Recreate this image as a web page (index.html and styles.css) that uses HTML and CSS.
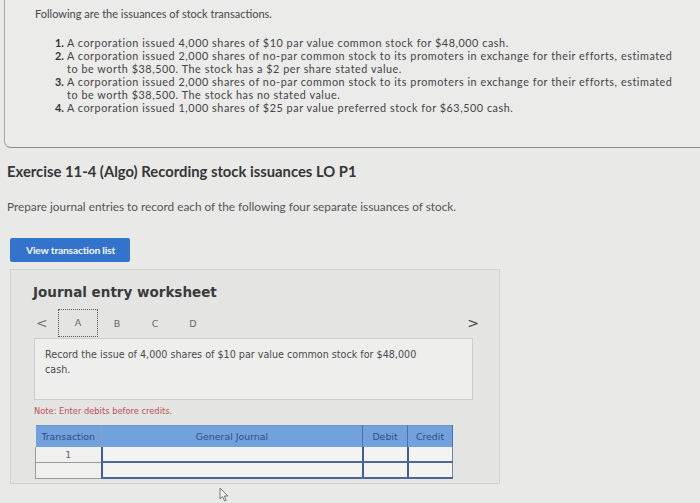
FILE: index.html
```html
<!DOCTYPE html>
<html>
<head>
<meta charset="utf-8">
<link rel="stylesheet" href="styles.css">
</head>
<body>
<div class="page">
  <section class="top-box">
    <p class="intro">Following are the issuances of stock transactions.</p>
    <ol class="list">
      <li><span class="num">1.</span><span>A corporation issued 4,000 shares of $10 par value common stock for $48,000 cash.</span></li>
      <li><span class="num">2.</span><span>A corporation issued 2,000 shares of no-par common stock to its promoters in exchange for their efforts, estimated<br>to be worth $38,500. The stock has a $2 per share stated value.</span></li>
      <li><span class="num">3.</span><span>A corporation issued 2,000 shares of no-par common stock to its promoters in exchange for their efforts, estimated<br>to be worth $38,500. The stock has no stated value.</span></li>
      <li><span class="num">4.</span><span>A corporation issued 1,000 shares of $25 par value preferred stock for $63,500 cash.</span></li>
    </ol>
  </section>

  <h2 class="exercise">Exercise 11-4 (Algo) Recording stock issuances LO P1</h2>
  <p class="prepare">Prepare journal entries to record each of the following four separate issuances of stock.</p>
  <div class="btn">View transaction list</div>

  <section class="panel">
    <h3 class="ws-title">Journal entry worksheet</h3>
    <div class="tabs">
      <span class="arrow left">&lt;</span>
      <span class="tab active">A</span>
      <span class="tab">B</span>
      <span class="tab">C</span>
      <span class="tab">D</span>
      <span class="arrow right">&gt;</span>
    </div>
    <div class="record">Record the issue of 4,000 shares of $10 par value common stock for $48,000<br>cash.</div>
    <p class="note">Note: Enter debits before credits.</p>
    <table class="journal">
      <colgroup><col class="w-tr"><col class="w-gj"><col class="w-d"><col class="w-c"></colgroup>
      <thead>
        <tr><th class="c-tr">Transaction</th><th class="c-gj">General Journal</th><th class="c-d">Debit</th><th class="c-c">Credit</th></tr>
      </thead>
      <tbody>
        <tr><td class="c-tr">1</td><td class="in"></td><td class="in"></td><td class="in"></td></tr>
        <tr><td class="c-tr"></td><td class="in"></td><td class="in"></td><td class="in"></td></tr>
      </tbody>
    </table>
  </section>

  <svg class="cursor" width="10" height="15" viewBox="0 0 10 15"><path d="M1 1 L1 12 L3.6 9.6 L5.6 14 L7.2 13.2 L5.3 9 L8.8 9 Z" fill="#f4f4f4" stroke="#6a6a6a" stroke-width="0.9" stroke-linejoin="round"/></svg>
</div>
</body>
</html>
```

FILE: styles.css
```css
html, body {
  margin: 0;
  padding: 0;
}
body {
  background: #e9e9e8;
  font-family: Lato, "Open Sans", sans-serif;
  color: #4a4a4a;
}
.page {
  position: relative;
  width: 700px;
  height: 503px;
  overflow: hidden;
}
.top-box {
  margin-left: 4px;
  height: 148px;
  box-sizing: border-box;
  border-left: 1px solid #a4a4a4;
  border-bottom: 1px solid #8c8c8c;
  border-bottom-left-radius: 7px;
  padding: 6px 0 0 30px;
  background: #ebebea;
}
.intro {
  margin: 0;
  font-size: 11px;
  line-height: 16px;
  color: #474747;
}
.list {
  list-style: none;
  margin: 14px 0 0 20px;
  padding: 0;
  font-size: 10.8px;
  letter-spacing: 0.55px;
  line-height: 13px;
  color: #444;
  white-space: nowrap;
}
.list li {
  display: flex;
}
.num {
  width: 12px;
  flex: none;
  font-weight: 700;
  letter-spacing: 0;
  color: #333;
}
.exercise {
  margin: 14px 0 0 7px;
  font-size: 14.8px;
  line-height: 18px;
  font-weight: 700;
  color: #363636;
}
.prepare {
  margin: 20px 0 0 7px;
  font-size: 11.8px;
  line-height: 14px;
  color: #555;
}
.btn {
  margin: 24px 0 0 10px;
  width: 120px;
  height: 24px;
  box-sizing: border-box;
  background: #3473cb;
  border-radius: 2px;
  color: #f4f7fc;
  font-size: 10.3px;
  font-weight: 700;
  letter-spacing: -0.2px;
  line-height: 24px;
  padding-left: 16px;
}
.panel {
  margin: 7px 0 0 10px;
  width: 490px;
  height: 215px;
  box-sizing: border-box;
  background: #e4e4e3;
  border: 1px solid #d2d2d2;
  padding: 14px 0 0 22px;
  font-family: "DejaVu Sans", Verdana, sans-serif;
}
.ws-title {
  margin: 0;
  font-size: 13.5px;
  line-height: 16px;
  font-weight: 700;
  color: #3a3a3a;
}
.tabs {
  display: flex;
  align-items: center;
  height: 28px;
  margin-top: 9px;
  font-size: 9.5px;
  color: #6a6a6a;
  padding-right: 20px;
}
.arrow {
  font-size: 14px;
  color: #777;
}
.arrow.left {
  margin-left: 3px;
  width: 22px;
}
.arrow.right {
  margin-left: auto;
  color: #444;
}
.tab {
  width: 38px;
  text-align: center;
}
.tab.active {
  width: 40px;
  height: 28px;
  box-sizing: border-box;
  border: 1px dotted #555;
  line-height: 26px;
}
.record {
  margin: 1px 0 0 1px;
  width: 439px;
  height: 62px;
  box-sizing: border-box;
  background: #eeeeed;
  border: 1px solid #cdcdcd;
  padding: 8px 0 0 10px;
  font-size: 9.6px;
  line-height: 15px;
  color: #4a4a4a;
}
.note {
  margin: 6px 0 0 1px;
  font-size: 8.3px;
  line-height: 11px;
  color: #c0504f;
}
.journal {
  margin: 8px 0 0 2px;
  border-collapse: collapse;
  font-size: 9.4px;
  table-layout: fixed;
  width: 417px;
}
.w-tr { width: 66px; }
.w-gj { width: 261px; }
.w-d { width: 45px; }
.w-c { width: 45px; }
.journal th {
  height: 21px;
  padding: 0;
  background: #72a2dd;
  color: #2d4f85;
  font-weight: 400;
  border-right: 1px solid #4c70a8;
  border-top: 1px solid #6d93c9;
}
.journal th.c-tr { border-right: 1px solid #8aa0c0; }
.journal th.c-gj { border-left: 1px solid #3b5c94; }
.journal td {
  height: 14px;
  padding: 0;
  background: #f0f0ef;
}
.journal td.c-tr {
  text-align: center;
  color: #666;
  border-bottom: 1px solid #9a9a9a;
  border-left: 1px solid #9a9a9a;
}
.journal td.in {
  border-left: 2px solid #3e5f95;
  border-bottom: 2px solid #4b6896;
  border-right: 1px solid #6d86ad;
  background: #f3f3f2;
}
.cursor {
  position: absolute;
  left: 219px;
  top: 487px;
}
```
